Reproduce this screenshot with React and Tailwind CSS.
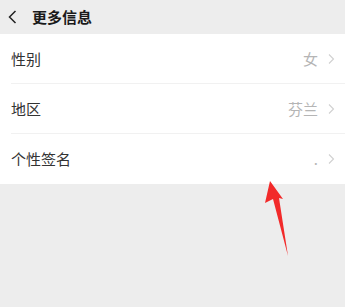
import React from "react";

const Chevron = () => (
  <svg width="7" height="12" viewBox="0 0 7 12" className="ml-[10px]">
    <path d="M1 1.5 L5.5 6 L1 10.5" fill="none" stroke="#d0d0d0" strokeWidth="1.1" />
  </svg>
);

const Row = ({ label, value, last }) => (
  <div className="relative flex items-center h-[50px] pl-[11px] pr-[10px]">
    <span className="text-[15px] text-[#333333]">{label}</span>
    <div className="ml-auto flex items-center">
      <span className="text-[15px] text-[#b5b5b5]">{value}</span>
      <Chevron />
    </div>
    {!last && <div className="absolute left-[11px] right-0 bottom-0 h-px bg-[#f1f1f1]" />}
  </div>
);

export default function App() {
  return (
    <div
      className="relative w-[345px] h-[307px] bg-[#ededed] overflow-hidden"
      style={{ fontFamily: '"Noto Sans CJK SC", "Noto Sans", sans-serif' }}
    >
      <div className="flex items-center h-[34px] pl-[8px]">
        <svg width="9" height="14" viewBox="0 0 9 14">
          <path d="M7.5 1 L1.5 7 L7.5 13" fill="none" stroke="#222" strokeWidth="1.5" />
        </svg>
        <span className="ml-[15px] text-[15px] font-bold text-[#1a1a1a]">更多信息</span>
      </div>
      <div className="bg-white">
        <Row label="性别" value="女" />
        <Row label="地区" value="芬兰" />
        <Row label="个性签名" value="." last />
      </div>
      <svg className="absolute left-0 top-0" width="345" height="307" viewBox="0 0 345 307">
        <polygon points="270,181 265,203 273,199 288,256 279,198 283,199" fill="#f22a2a" />
      </svg>
    </div>
  );
}
